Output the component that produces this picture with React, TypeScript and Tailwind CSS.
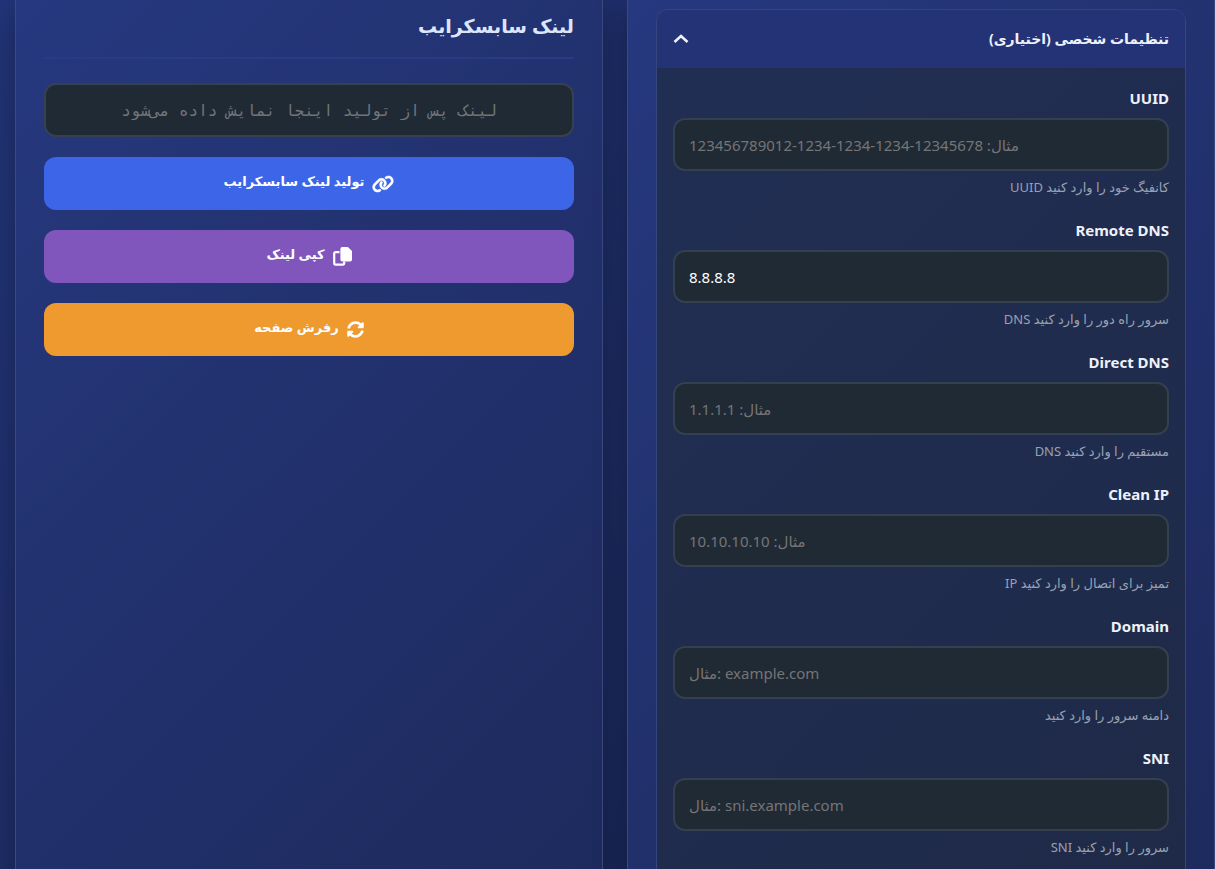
import { FaSyncAlt } from "react-icons/fa";
import { FaLink } from "react-icons/fa6";

type Field = { id: string; label: string; placeholder: string; hint: string; value?: string };

const fields: Field[] = [
  { id: "uuid", label: "UUID", placeholder: "مثال: 12345678-1234-1234-1234-123456789012", hint: "UUID کانفیگ خود را وارد کنید" },
  { id: "remote-dns", label: "Remote DNS", placeholder: "مثال: 8.8.8.8", hint: "DNS سرور راه دور را وارد کنید", value: "8.8.8.8" },
  { id: "direct-dns", label: "Direct DNS", placeholder: "مثال: 1.1.1.1", hint: "DNS مستقیم را وارد کنید" },
  { id: "clean-ip", label: "Clean IP", placeholder: "مثال: 10.10.10.10", hint: "IP تمیز برای اتصال را وارد کنید" },
  { id: "domain", label: "Domain", placeholder: "مثال: example.com", hint: "دامنه سرور را وارد کنید" },
  { id: "sni", label: "SNI", placeholder: "مثال: sni.example.com", hint: "SNI سرور را وارد کنید" },
];

const panel =
  "min-w-0 border-x border-[#3a4a80] bg-linear-135 from-[#26387f] to-[#1d2a5c] px-7 shadow-[0_8px_32px_rgba(0,0,0,0.3)]";
const action =
  "flex h-[53px] w-full items-center justify-center gap-2 rounded-xl text-[13px] font-bold text-white";

function CopyIcon() {
  return (
    <svg viewBox="0 0 19 19" className="size-[19px]" aria-hidden="true">
      <path d="M6.5 5.2H2.7A1.5 1.5 0 0 0 1.2 6.7v9.4a1.5 1.5 0 0 0 1.5 1.5h7a1.5 1.5 0 0 0 1.5-1.5V14.6" fill="none" stroke="currentColor" strokeWidth="2.2" />
      <path d="M9.3 0h5.6L19 4.1v8.4a1.9 1.9 0 0 1-1.9 1.9H9.3a1.9 1.9 0 0 1-1.9-1.9V1.9A1.9 1.9 0 0 1 9.3 0Z" fill="currentColor" />
    </svg>
  );
}

function FieldRow({ field }: { field: Field }) {
  return (
    <div className="flex flex-col">
      <label htmlFor={field.id} className="mb-2 text-right text-[15px] leading-6 font-bold text-[#edf1fa]">
        {field.label}
      </label>
      <input
        id={field.id}
        type="text"
        defaultValue={field.value}
        placeholder={field.placeholder}
        className="h-[53px] w-full rounded-xl border-2 border-[#343f4f] bg-[#202a35] px-[14px] text-[15px] text-white placeholder:text-[#757575]"
      />
      <p className="mt-1 text-right text-[13px] leading-6 text-[#98a1b3]">{field.hint}</p>
    </div>
  );
}

export default function App() {
  return (
    <main className="h-screen overflow-hidden bg-linear-135 from-[#22357a] to-[#18234f] pl-[15px] font-['Noto_Sans','DejaVu_Sans',sans-serif]">
      <div className="grid min-h-full grid-cols-2 gap-6">
        <section className={panel}>
          <h2 dir="rtl" className="mb-6 border-b-2 border-[#2a3a85] pt-2 pb-[13px] text-[19px] leading-9 font-bold text-[#dbe6fd]">
            لینک سابسکرایب
          </h2>
          <div className="flex flex-col gap-5">
            <input
              type="text"
              readOnly
              dir="rtl"
              aria-label="لینک سابسکرایب"
              placeholder="لینک پس از تولید اینجا نمایش داده می‌شود"
              className="h-[54px] w-full rounded-xl border-2 border-[#36414e] bg-[#202a35] px-4 text-center font-['DejaVu_Sans_Mono',monospace] text-base placeholder:text-[#70757a]"
            />
            <button type="button" dir="rtl" className={`${action} bg-[#3d65e8]`}>
              <FaLink className="h-[18px] w-[22px]" stroke="currentColor" strokeWidth="14" />
              <span className="pb-1">تولید لینک سابسکرایب</span>
            </button>
            <button type="button" dir="rtl" className={`${action} bg-[#8056bc]`}>
              <CopyIcon />
              <span className="pb-1">کپی لینک</span>
            </button>
            <button type="button" dir="rtl" className={`${action} bg-[#ee9a2f]`}>
              <FaSyncAlt className="size-[17px]" />
              <span className="pb-1">رفرش صفحه</span>
            </button>
          </div>
        </section>
        <section className={`${panel} pt-[9px] pb-7`}>
          <div className="overflow-hidden rounded-xl border border-[#35457e]">
            <button type="button" dir="rtl" className="flex h-[58px] w-full items-center justify-between bg-[#243375] px-4 text-sm font-bold text-[#edf1fa]">
              تنظیمات شخصی (اختیاری)
              <svg viewBox="0 0 16 10" className="h-[10px] w-4" fill="none" stroke="currentColor" strokeWidth="2.6" aria-hidden="true">
                <path d="M1.5 8 8 2l6.500 6" />
              </svg>
            </button>
            <div className="flex flex-col gap-[19px] bg-linear-135 from-[#212e54] to-[#1f2a48] px-4 pt-[18px] pb-5">
              {fields.map((f) => (
                <FieldRow key={f.id} field={f} />
              ))}
            </div>
          </div>
        </section>
      </div>
    </main>
  );
}
